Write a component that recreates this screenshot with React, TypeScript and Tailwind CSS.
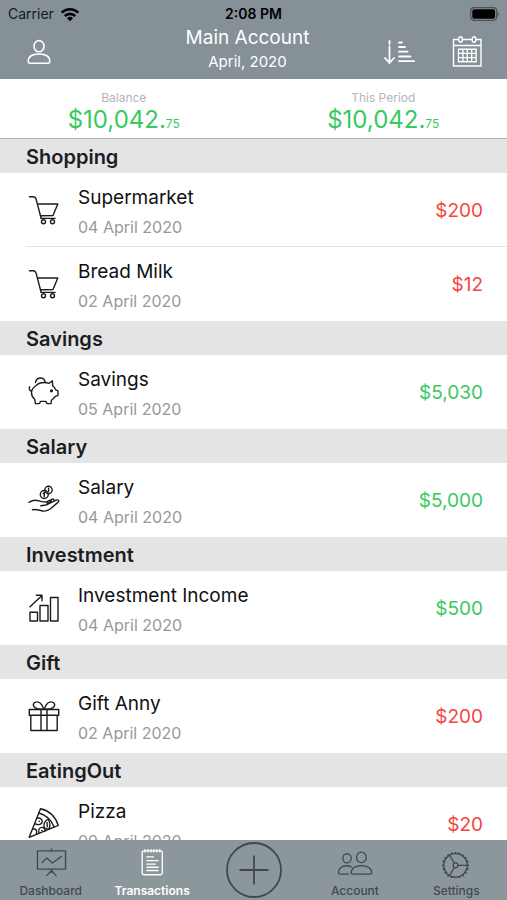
import type { ReactNode } from "react";

type Entry = { title: string; date: string; amount: string; income?: boolean; icon: ReactNode };
type Section = { name: string; entries: Entry[] };

function Glyph({ children }: { children: ReactNode }) {
  return (
    <svg
      viewBox="0 0 32 32"
      className="size-8 shrink-0"
      fill="none"
      stroke="currentColor"
      strokeWidth="1.4"
      strokeLinecap="round"
      strokeLinejoin="round"
      aria-hidden="true"
    >
      {children}
    </svg>
  );
}

const cart = (
  <Glyph>
    <path d="M1.500 2.700h3.700c1.600 0 2.400.8 2.900 2.400l4.900 18.600" />
    <path d="M9.500 10h20.300l-4.800 11.500-12.600.2M13 24.400h14" />
    <circle cx="15.500" cy="27.700" r="2" />
    <circle cx="24.500" cy="27.700" r="2" />
  </Glyph>
);

const piggy = (
  <Glyph>
    <path d="M8.200 9.500c2-2 4.800-3 8-3 1.900 0 3.500.3 4.900.8l3.300-2.500.3 5c1.400 1.200 2.400 2.400 3 4l2.300 1.100v4.500l-3 1.300c-.9 1.400-2.100 2.500-3.400 3.300l-.7 3.600h-4l-.9-2.200h-5.600l-.9 2.200h-4l-.8-4.300c-2-1.700-3.200-4-3.200-6.600 0-2.700 1.600-5.300 4.700-7.200Z" />
    <path d="M7.500 6.500C8 3.500 10 2 12.500 2s4.200 1.600 4.600 4M3.500 15c-2-.3-2.700-2-1.900-4.200" />
    <circle cx="23.500" cy="14.800" r=".9" fill="currentColor" />
  </Glyph>
);

const handCoins = (
  <Glyph>
    <circle cx="20.500" cy="6" r="3.700" />
    <circle cx="16.300" cy="10.500" r="4" />
    <path d="M16.300 8.400v4.200M15.300 9.700l1-1M20.600 4.200v3.300" />
    <path d="M1 18.300c3.500-2.300 6.600-2.700 9.800-1.400 2 .8 4 1.100 7 1 2.400 0 2.300 2.700.2 3.100l-5.200.8" />
    <path d="m18.900 20.500 9.200-4.300c2.400-1 3.500.6 1.800 2.200l-7.400 6.400c-1.800 1.500-4.200 2.700-7.500 2.200-4-.7-6.500-2.200-10.600-1.300" />
    <path d="m18.500 17.800 5.800-2.600c1.200-.4 1.900.2 1.700 1.100M20.500 19l2.800-2.200" />
  </Glyph>
);

const growth = (
  <Glyph>
    <path d="M2 20.300h7.500V29H2zM12 13.500h8V29h-8zM22.500 5.500H30V29h-7.500zM2 14.800 14 3.400M8.300 3.200H14v5.600" />
  </Glyph>
);

const gift = (
  <Glyph>
    <path d="M1.300 9.500h29.400v5.700H1.300zM2.800 15.200V30.500h26.400V15.200M13 9.500v21M19 9.500v21" />
    <path d="M15 9.300C8.500 9.500 4.500 7 5.500 4s5.800-3 8.500 1.200l1.800 4M17 9.300C23.500 9.500 27.500 7 26.500 4s-5.800-3-8.500 1.200l-1.800 4" />
  </Glyph>
);

const pizza = (
  <Glyph>
    <path d="M1.200 29.300 12.500.8c9 1.800 14.500 7.200 17.800 16.600Z" />
    <path d="M10.800 5C18 7 23.200 11.200 26 18.800" />
    <path d="M8.800 10.300c3-1.200 5.500.8 5.400 3.300-.1 2.700-4 4-6.800 2.200M4.700 21.200c3-1 4.700 1 3.700 4.700M10.800 25c-.8-4 1.200-5.600 3.200-5.600s3.300 1.500 3 3.800M16 18.500c-.4-3 1.500-6 4-7.500 1.200 2 2.400 6.500 1.200 9.800-2.400.6-4.900-.1-5.200-2.300Z" />
    <path d="m19 14.500.3 4.200M11.200 13.200h.2M13.800 22.500h.2" />
  </Glyph>
);

const sections: Section[] = [
  {
    name: "Shopping",
    entries: [
      { title: "Supermarket", date: "04 April 2020", amount: "$200", icon: cart },
      { title: "Bread Milk", date: "02 April 2020", amount: "$12", icon: cart },
    ],
  },
  { name: "Savings", entries: [{ title: "Savings", date: "05 April 2020", amount: "$5,030", income: true, icon: piggy }] },
  { name: "Salary", entries: [{ title: "Salary", date: "04 April 2020", amount: "$5,000", income: true, icon: handCoins }] },
  { name: "Investment", entries: [{ title: "Investment Income", date: "04 April 2020", amount: "$500", income: true, icon: growth }] },
  { name: "Gift", entries: [{ title: "Gift Anny", date: "02 April 2020", amount: "$200", icon: gift }] },
  { name: "EatingOut", entries: [{ title: "Pizza", date: "09 April 2020", amount: "$20", icon: pizza }] },
];

function StatusBar() {
  return (
    <div className="grid h-7 grid-cols-3 items-center px-2 text-sm leading-7 text-[#16191c]">
      <div className="flex items-center gap-[6px]">
        <span>Carrier</span>
        <svg viewBox="0 0 20 15" className="h-[15px] w-5 text-black" fill="none" stroke="currentColor" strokeWidth="2.600" aria-hidden="true">
          <path d="M1.700 5.700a11.800 11.800 0 0 1 16.600 0M4.800 9a7.400 7.400 0 0 1 10.400 0" />
          <path d="m10 14.300-3-3.100a4.300 4.300 0 0 1 6 0Z" fill="currentColor" stroke="none" />
        </svg>
      </div>
      <span className="text-center text-sm leading-7 font-semibold text-black">2:08 PM</span>
      <svg viewBox="0 0 30 14" className="h-[14px] w-[30px] justify-self-end" aria-hidden="true">
        <rect x="1.700" y=".7" width="26" height="12.600" rx="3.500" fill="none" stroke="#4c5154" strokeWidth="1.200" />
        <rect x="3.300" y="2.300" width="22.800" height="9.400" rx="2" fill="#000" />
        <path d="M28.500 4.800c1.700.8 1.700 3.600 0 4.400Z" fill="#4c5154" />
      </svg>
    </div>
  );
}

function Header() {
  return (
    <header className="h-[79px] shrink-0 bg-[#869097] text-white">
      <StatusBar />
      <div className="grid grid-cols-[1fr_auto_1fr] items-start px-6">
        <button type="button" aria-label="Profile" className="mt-2 w-[30px]">
          <svg viewBox="0 0 30 32" className="h-8 w-[30px]" fill="none" stroke="currentColor" strokeWidth="1.600" aria-hidden="true">
            <ellipse cx="15" cy="10.200" rx="5" ry="5.600" />
            <path d="M4.200 25.600c0-5 4.300-7.600 10.800-7.600s10.800 2.600 10.800 7.600c0 1-.5 1.600-1.500 1.600H5.700c-1 0-1.500-.6-1.500-1.600Z" />
          </svg>
        </button>
        <div className="-ml-3 text-center">
          <h1 className="text-[19px] leading-5">Main Account</h1>
          <p className="text-[15px] leading-7">April, 2020</p>
        </div>
        <div className="mt-2 flex justify-end gap-9">
          <button type="button" aria-label="Sort">
            <svg viewBox="0 0 32 32" className="size-8" fill="none" stroke="currentColor" strokeWidth="1.800" strokeLinecap="round" strokeLinejoin="round" aria-hidden="true">
              <path d="M6.500 5v3M6.500 10.500V27M2 22l4.500 5 4.500-5M16 6.500h3M16 11h6M16 15.700h8.500M16 20.500h11.500M16 25.200h15" />
            </svg>
          </button>
          <button type="button" aria-label="Calendar">
            <svg viewBox="0 0 32 32" className="size-8" fill="none" stroke="currentColor" strokeWidth="1.400" aria-hidden="true">
              <path d="M7.500 3.500H2.500v26.500h27.500V3.500h-5M11.500 3.500h9.500M2.500 9.500h27.500" />
              <ellipse cx="9.500" cy="3.500" rx="1.900" ry="2.700" />
              <ellipse cx="23" cy="3.500" rx="1.900" ry="2.700" />
              <path d="M7.500 13.200h17.600v12.600H7.500zM7.500 17.400h17.600M7.500 21.600h17.600M11.900 13.200v12.600M16.300 13.200v12.600M20.700 13.200v12.600" />
            </svg>
          </button>
        </div>
      </div>
    </header>
  );
}

function Total({ label }: { label: string }) {
  return (
    <div className="flex-1 pt-3 text-center">
      <div className="text-xs leading-[14px] text-[#b4b4b8]">{label}</div>
      <div className="text-2xl leading-[30px] text-[#38c95f]">
        $10,042.<span className="text-xs">75</span>
      </div>
    </div>
  );
}

function Row({ entry }: { entry: Entry }) {
  return (
    <li className="group flex h-[74px] items-center pl-[26px]">
      <div className="flex h-full min-w-0 flex-1 items-center border-b border-[#e4e4e6] pt-px pr-6 group-last:border-transparent">
        <div className="w-[52px] pl-[2px] text-[#1c1c1c]">{entry.icon}</div>
        <div className="min-w-0 flex-1 pt-[6px]">
          <div className="truncate text-[19px] leading-7 text-[#111]">{entry.title}</div>
          <div className="text-base leading-[30px] text-[#98989b]">{entry.date}</div>
        </div>
        <div className={entry.income ? "pt-[2px] text-[19px] text-[#38c95f]" : "pt-[2px] text-[19px] text-[#f5443c]"}>{entry.amount}</div>
      </div>
    </li>
  );
}

function Tab({ label, active, children }: { label: string; active?: boolean; children: ReactNode }) {
  return (
    <button
      type="button"
      aria-current={active ? "page" : undefined}
      className={
        active
          ? "flex min-w-0 flex-1 flex-col items-center pt-2 font-semibold text-white"
          : "flex min-w-0 flex-1 flex-col items-center pt-2 font-medium text-[#42494d]"
      }
    >
      <svg viewBox="0 0 40 32" className="h-8 w-10" fill="none" stroke="currentColor" strokeWidth="1.400" strokeLinecap="round" strokeLinejoin="round" aria-hidden="true">
        {children}
      </svg>
      <span className="pt-1 text-xs leading-[18px]">{label}</span>
    </button>
  );
}

const teeth = Array.from({ length: 20 }, (_, i) => i * 18);

function TabBar() {
  return (
    <nav className="flex h-[60px] shrink-0 bg-[#8b979b]">
      <Tab label="Dashboard">
        <path d="M5.500 3h30v19.500h-30zM20.500 1v2M20.500 22.500V26M15.500 29.500l5-5.500 5 5.500" />
        <path d="m10.500 15.500 5-4.800 6 5.300 9.500-7" />
      </Tab>
      <Tab label="Transactions" active>
        <rect x="9.500" y="3" width="21.500" height="25.500" rx="2" />
        <path d="M12.500 1.700v2.500M15.700 1.700v2.500M19 1.700v2.500M22 1.700v2.500M25.200 1.700v2.500M28.300 1.700v2.500M14.500 9.500h7M14.500 13.500h12M14.500 17.200h9M14.500 20.500h12M14.500 24h12" />
      </Tab>
      <button type="button" aria-label="Add transaction" className="flex min-w-0 flex-1 items-start justify-center pt-[2px] text-[#42494d]">
        <svg viewBox="0 0 56 56" className="size-14" fill="none" stroke="currentColor" strokeWidth="1.800" aria-hidden="true">
          <circle cx="28" cy="28" r="27" />
          <path d="M28 13.500v29M13.500 28h29" />
        </svg>
      </button>
      <Tab label="Account">
        <ellipse cx="11.500" cy="11" rx="4.500" ry="4.900" />
        <ellipse cx="26.800" cy="10" rx="5.200" ry="5.600" />
        <path d="M16 20.100c-1.300-.8-2.900-1.200-4.700-1.200-5.300 0-9 2.900-9 7.100 0 1.200.5 1.800 1.500 1.800h9.500" />
        <path d="M16 26c0-4.300 4.500-7.200 10.800-7.200S37.700 21.700 37.700 26c0 1.200-.5 1.800-1.500 1.800H17.500c-1 0-1.500-.6-1.500-1.800Z" />
      </Tab>
      <Tab label="Settings">
        <circle cx="19.500" cy="18.500" r="12.500" />
        <circle cx="19.500" cy="18.500" r="2.600" />
        <path d="M22.100 18.500H32M18.200 16.200 13.200 7.700M18.200 20.800 13.200 29.300" />
        {teeth.map((angle) => (
          <path key={angle} d="M19.500 6V4.200" strokeWidth="2" strokeLinecap="butt" transform={`rotate(${angle} 19.500 18.500)`} />
        ))}
      </Tab>
    </nav>
  );
}

export default function App() {
  return (
    <div className="flex h-screen flex-col overflow-hidden bg-white font-['Inter','Liberation_Sans',sans-serif]">
      <Header />
      <div className="-mx-[6px] flex h-[60px] shrink-0 border-b border-[#b0b0b2]">
        <Total label="Balance" />
        <Total label="This Period" />
      </div>
      <main className="min-h-0 flex-1 overflow-y-auto [scrollbar-width:none]">
        {sections.map((section) => (
          <section key={section.name}>
            <h2 className="h-[34px] bg-[#e4e4e5] pl-[26px] text-xl leading-[36px] font-semibold text-[#1d1d1f]">{section.name}</h2>
            <ul>
              {section.entries.map((entry) => (
                <Row key={entry.title} entry={entry} />
              ))}
            </ul>
          </section>
        ))}
      </main>
      <TabBar />
    </div>
  );
}
